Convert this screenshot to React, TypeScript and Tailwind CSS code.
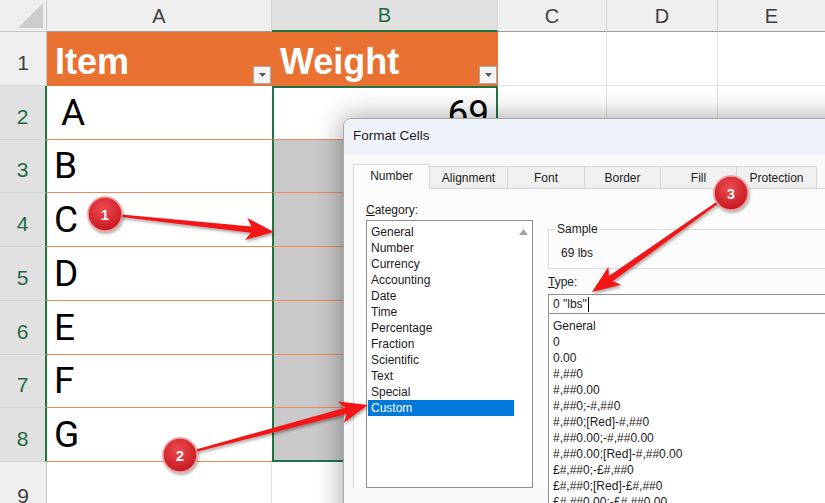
import React from 'react';

const cellFont = { fontFamily: 'Roboto, "Liberation Sans", sans-serif' };

const rows = [
  { n: 2, h: 54, item: 'A', weight: '69' },
  { n: 3, h: 53, item: 'B' },
  { n: 4, h: 54, item: 'C' },
  { n: 5, h: 54, item: 'D' },
  { n: 6, h: 54, item: 'E' },
  { n: 7, h: 53, item: 'F' },
  { n: 8, h: 54, item: 'G' },
];

const categories = [
  'General', 'Number', 'Currency', 'Accounting', 'Date', 'Time',
  'Percentage', 'Fraction', 'Scientific', 'Text', 'Special', 'Custom',
];

const formats = [
  'General',
  '0',
  '0.00',
  '#,##0',
  '#,##0.00',
  '#,##0;-#,##0',
  '#,##0;[Red]-#,##0',
  '#,##0.00;-#,##0.00',
  '#,##0.00;[Red]-#,##0.00',
  '£#,##0;-£#,##0',
  '£#,##0;[Red]-£#,##0',
  '£#,##0.00;-£#,##0.00',
];

const tabs = [
  { label: 'Number', w: 77 },
  { label: 'Alignment', w: 78 },
  { label: 'Font', w: 77 },
  { label: 'Border', w: 76 },
  { label: 'Fill', w: 76 },
  { label: 'Protection', w: 80 },
];

function FilterButton() {
  return (
    <div className="w-[18px] h-[18px] mb-[2px] mr-[1px] bg-[#f4f4f4] border border-[#a9a9a9] flex items-center justify-center shrink-0">
      <svg width="7" height="4" viewBox="0 0 7 4">
        <path d="M0 0 L7 0 L3.5 4 Z" fill="#555" />
      </svg>
    </div>
  );
}

function ColHeader({ label, w, selected }: { label: string; w: string; selected?: boolean }) {
  return (
    <div
      className={`${w} h-full flex items-center justify-center text-[20px] border-r border-[#d4d4d4] ${
        selected
          ? 'bg-[#e1e1e1] text-[#1d6b40] border-b-2 border-b-[#217346]'
          : 'bg-[#efefef] text-[#3f3f3f] border-b border-b-[#9e9e9e]'
      }`}
    >
      {label}
    </div>
  );
}

function RowHeader({ n, selected }: { n: number; selected?: boolean }) {
  return (
    <div
      className={`w-[47px] h-full shrink-0 flex items-center justify-center pt-[8px] text-[21px] border-b border-[#d4d4d4] ${
        selected
          ? 'bg-[#e1e1e1] text-[#1d6b40] border-r-2 border-r-[#217346]'
          : 'bg-[#efefef] text-[#3f3f3f] border-r border-r-[#c8c8c8]'
      }`}
    >
      {n}
    </div>
  );
}

function EmptyCells() {
  return (
    <>
      <div className="w-[109px] h-full border-r border-b border-[#e1e1e1]" />
      <div className="w-[111px] h-full border-r border-b border-[#e1e1e1]" />
      <div className="flex-1 h-full border-b border-[#e1e1e1]" />
    </>
  );
}

function arrowPoints(x1: number, y1: number, x2: number, y2: number) {
  const dx = x2 - x1;
  const dy = y2 - y1;
  const len = Math.hypot(dx, dy);
  const ux = dx / len;
  const uy = dy / len;
  const nx = -uy;
  const ny = ux;
  const headLen = 26;
  const headW = 11;
  const bx = x2 - ux * headLen;
  const by = y2 - uy * headLen;
  const pts = [
    [x1 + nx * 1, y1 + ny * 1],
    [bx + ux * 3 + nx * 3.2, by + uy * 3 + ny * 3.2],
    [bx - ux * 2 + nx * headW, by - uy * 2 + ny * headW],
    [x2, y2],
    [bx - ux * 2 - nx * headW, by - uy * 2 - ny * headW],
    [bx + ux * 3 - nx * 3.2, by + uy * 3 - ny * 3.2],
    [x1 - nx * 1, y1 - ny * 1],
  ];
  return pts.map((p) => `${p[0].toFixed(1)},${p[1].toFixed(1)}`).join(' ');
}

const callouts = [
  { n: '1', cx: 105, cy: 214, tx: 274, ty: 232 },
  { n: '2', cx: 180, cy: 455, tx: 368, ty: 405 },
  { n: '3', cx: 731, cy: 193, tx: 592, ty: 292 },
];

function Annotations() {
  return (
    <svg className="absolute inset-0 pointer-events-none" width="825" height="503" viewBox="0 0 825 503">
      <defs>
        <radialGradient id="badge" cx="45%" cy="35%" r="70%">
          <stop offset="0%" stopColor="#ee4a50" />
          <stop offset="100%" stopColor="#c3161d" />
        </radialGradient>
        <filter id="shadow" x="-20%" y="-20%" width="140%" height="140%">
          <feDropShadow dx="1" dy="2" stdDeviation="1.6" floodColor="#000" floodOpacity="0.35" />
        </filter>
      </defs>
      {callouts.map((c) => (
        <polygon key={`a${c.n}`} points={arrowPoints(c.cx, c.cy, c.tx, c.ty)} fill="#f21616" filter="url(#shadow)" />
      ))}
      {callouts.map((c) => (
        <g key={`c${c.n}`} filter="url(#shadow)">
          <circle cx={c.cx} cy={c.cy} r="17" fill="url(#badge)" stroke="#f39a9a" strokeWidth="1.5" />
          <text
            x={c.cx}
            y={c.cy + 5.5}
            textAnchor="middle"
            fontSize="15"
            fontWeight="700"
            fill="#fff"
            fontFamily='"Liberation Sans", Arial, sans-serif'
          >
            {c.n}
          </text>
        </g>
      ))}
    </svg>
  );
}

function FormatCellsDialog() {
  return (
    <div
      className="absolute left-[343px] top-[118px] w-[520px] h-[420px] rounded-t-[8px] border border-[#a8a8a8] bg-[#f9f9f9] overflow-hidden shadow-[0_0_28px_rgba(0,0,0,0.38)] text-[12px] text-[#1b1b1b]"
      style={{ fontFamily: '"Liberation Sans", Arial, sans-serif' }}
    >
      {/* Title bar */}
      <div className="h-[35px] bg-[#eef3f9] flex items-center pl-[9px] text-[13.5px] text-[#1b1b1b]">Format Cells</div>

      {/* Tabs */}
      <div className="pt-[10px] pl-[9px]">
        <div className="flex items-end h-[25px]">
          {tabs.map((t, i) => (
            <div
              key={t.label}
              style={{ width: t.w }}
              className={
                i === 0
                  ? 'h-[25px] bg-[#fcfcfc] border border-b-0 border-[#d6d6d6] flex items-center justify-center pb-[3px] relative z-10'
                  : 'h-[23px] bg-[#f0f0f0] border border-l-0 border-[#d6d6d6] flex items-center justify-center pt-[1px]'
              }
            >
              {t.label}
            </div>
          ))}
          <div className="flex-1 h-[23px] border-b border-[#d6d6d6]" />
        </div>

        {/* Panel */}
        <div className="-mt-px border-l border-t border-[#d6d6d6] bg-[#fcfcfc] h-[300px] flex pl-[12px] pt-[14px]">
          {/* Category column */}
          <div className="w-[167px] shrink-0 flex flex-col">
            <div className="h-[14px] leading-[14px] mb-[3px]">
              <span className="underline">C</span>ategory:
            </div>
            <div className="flex-1 bg-white border border-[#8f8f8f] flex pt-[3px]">
              <div className="flex-1 flex flex-col pl-px">
                {categories.map((c) => (
                  <div
                    key={c}
                    className={`h-[16px] leading-[16px] pl-[3px] ${c === 'Custom' ? 'bg-[#0078d7] text-white' : ''}`}
                  >
                    {c}
                  </div>
                ))}
              </div>
              <div className="w-[18px] shrink-0 flex justify-center pt-[5px]">
                <svg width="9" height="6" viewBox="0 0 9 6">
                  <path d="M0 6 L4.5 0 L9 6 Z" fill="#a3a3a3" />
                </svg>
              </div>
            </div>
          </div>

          {/* Right column */}
          <div className="flex-1 ml-[15px] flex flex-col pt-[19px]">
            <fieldset className="border border-[#dcdcdc] pb-[8px] mr-[-40px]">
              <legend className="ml-[7px] px-[1px] h-[14px] leading-[14px]">Sample</legend>
              <div className="mt-[10px] pl-[12px] h-[14px] leading-[14px]">69 lbs</div>
            </fieldset>
            <div className="mt-[6px] h-[14px] leading-[14px] mb-[5px]">
              <span className="underline">T</span>ype:
            </div>
            <div className="h-[24px] bg-white border border-[#8f8f8f] flex items-center pl-[4px] mr-[-40px]">
              <span>0 "lbs"</span>
              <span className="w-px h-[15px] bg-black ml-px" />
            </div>
            <div className="-mt-px flex-1 bg-white border border-[#8f8f8f] pt-[4px] pl-[4px] mr-[-40px]">
              {formats.map((f) => (
                <div key={f} className="h-[16px] leading-[16px] whitespace-nowrap">
                  {f}
                </div>
              ))}
            </div>
          </div>
        </div>
      </div>
    </div>
  );
}

export default function App() {
  return (
    <div className="relative w-[825px] h-[503px] overflow-hidden bg-white" style={cellFont}>
      <div className="flex flex-col" style={{ fontFamily: '"Liberation Sans", Arial, sans-serif' }}>
        {/* Column headers */}
        <div className="flex h-[32px]">
          <div className="w-[47px] h-full shrink-0 bg-[#efefef] border-r border-b border-[#c8c8c8] flex items-end justify-end p-[3px]">
            <svg width="25" height="25" viewBox="0 0 25 25">
              <path d="M25 0 L25 25 L0 25 Z" fill="#cdcdcd" />
            </svg>
          </div>
          <ColHeader label="A" w="w-[225px]" />
          <ColHeader label="B" w="w-[226px]" selected />
          <ColHeader label="C" w="w-[109px]" />
          <ColHeader label="D" w="w-[111px]" />
          <div className="flex-1 h-full bg-[#efefef] border-b border-[#9e9e9e] flex items-center justify-center text-[20px] text-[#3f3f3f]">
            E
          </div>
        </div>

        {/* Row 1 – table header */}
        <div className="flex h-[54px]">
          <RowHeader n={1} />
          <div className="w-[225px] h-full bg-[#e97132] flex">
            <div className="flex-1 self-center pl-[8px] pt-[5px] text-[36px] font-bold text-white leading-none">Item</div>
            <div className="self-end">
              <FilterButton />
            </div>
          </div>
          <div className="w-[226px] h-full bg-[#e97132] flex">
            <div className="flex-1 self-center pl-[8px] pt-[5px] text-[36px] font-bold text-white leading-none">Weight</div>
            <div className="self-end">
              <FilterButton />
            </div>
          </div>
          <EmptyCells />
        </div>

        {/* Data rows */}
        {rows.map((r, i) => (
          <div key={r.n} className="flex" style={{ height: r.h }}>
            <RowHeader n={r.n} selected />
            <div
              className={`w-[225px] h-full border-b border-[#ee8b58] flex items-center text-[37px] text-black ${
                r.n === 2 ? 'pl-[14px]' : 'pl-[7px]'
              }`}
              style={cellFont}
            >
              {r.item}
            </div>
            <div
              className={`w-[226px] h-full border-x-2 border-x-[#217346] flex items-center justify-end pr-[7px] text-[37px] text-black ${
                r.n === 2 ? 'bg-white border-t-2 border-t-[#217346]' : 'bg-[#c9c9c9]'
              } ${i === rows.length - 1 ? 'border-b-2 border-b-[#217346]' : 'border-b border-b-[#ee8b58]'}`}
              style={cellFont}
            >
              {r.weight ?? ''}
            </div>
            <EmptyCells />
          </div>
        ))}

        {/* Row 9 */}
        <div className="flex h-[60px]">
          <RowHeader n={9} />
          <div className="w-[225px] h-full border-r border-[#e1e1e1]" />
          <div className="w-[226px] h-full border-r border-[#e1e1e1]" />
          <EmptyCells />
        </div>
      </div>

      <FormatCellsDialog />
      <Annotations />
    </div>
  );
}
